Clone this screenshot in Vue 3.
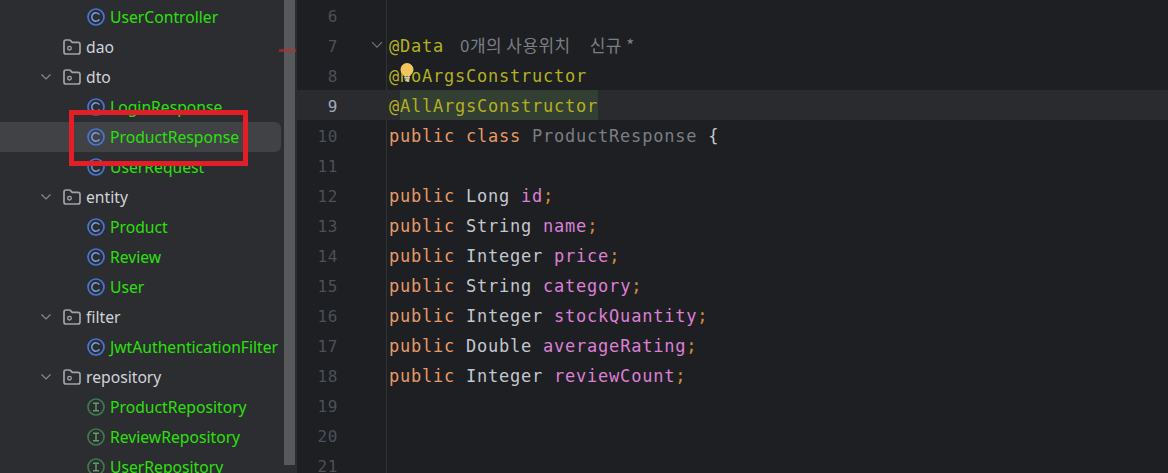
<script setup>
const tree = [
  { name: 'UserController', indent: 87, icon: 'c', kind: 'file' },
  { name: 'dao', indent: 63, icon: 'folder', kind: 'dir' },
  { name: 'dto', indent: 63, icon: 'folder', kind: 'dir', open: true },
  { name: 'LoginResponse', indent: 87, icon: 'c', kind: 'file' },
  { name: 'ProductResponse', indent: 87, icon: 'c', kind: 'file', selected: true },
  { name: 'UserRequest', indent: 87, icon: 'c', kind: 'file' },
  { name: 'entity', indent: 63, icon: 'folder', kind: 'dir', open: true },
  { name: 'Product', indent: 87, icon: 'c', kind: 'file' },
  { name: 'Review', indent: 87, icon: 'c', kind: 'file' },
  { name: 'User', indent: 87, icon: 'c', kind: 'file' },
  { name: 'filter', indent: 63, icon: 'folder', kind: 'dir', open: true },
  { name: 'JwtAuthenticationFilter', indent: 87, icon: 'c', kind: 'file' },
  { name: 'repository', indent: 63, icon: 'folder', kind: 'dir', open: true },
  { name: 'ProductRepository', indent: 87, icon: 'i', kind: 'file' },
  { name: 'ReviewRepository', indent: 87, icon: 'i', kind: 'file' },
  { name: 'UserRepository', indent: 87, icon: 'i', kind: 'file' }
]

const field = (type, name) => [
  ['kw', 'public '],
  ['type', type + ' '],
  ['field', name],
  ['semi', ';']
]

const lines = [
  { n: 6, parts: [] },
  { n: 7, fold: true, parts: [['ann', '@Data']], hint: true },
  { n: 8, parts: [['ann', '@NoArgsConstructor']] },
  { n: 9, current: true, parts: [['ann', '@'], ['ann mark', 'AllArgsConstructor']] },
  { n: 10, parts: [['kw', 'public class '], ['cls', 'ProductResponse '], ['type', '{']] },
  { n: 11, parts: [] },
  { n: 12, parts: field('Long', 'id') },
  { n: 13, parts: field('String', 'name') },
  { n: 14, parts: field('Integer', 'price') },
  { n: 15, parts: field('String', 'category') },
  { n: 16, parts: field('Integer', 'stockQuantity') },
  { n: 17, parts: field('Double', 'averageRating') },
  { n: 18, parts: field('Integer', 'reviewCount') },
  { n: 19, parts: [] },
  { n: 20, parts: [] },
  { n: 21, parts: [] }
]
</script>

<template>
  <div class="ide">
    <aside class="sidebar">
      <ul class="tree">
        <li
          v-for="row in tree"
          :key="row.name"
          class="row"
          :class="{ selected: row.selected }"
          :style="{ paddingLeft: row.indent + 'px' }"
        >
          <svg v-if="row.open" class="chevron" width="12" height="8" viewBox="0 0 12 8" fill="none">
            <path d="M1.500 1.500 6 6l4.500-4.500" stroke="#878a90" stroke-width="1.200" />
          </svg>
          <svg v-if="row.icon === 'folder'" class="icon" width="18" height="16" viewBox="0 0 18 16" fill="none">
            <path d="M1 3C1 1.900 1.900 1 3 1h3.200c.6 0 1 .3 1.400.7L9.200 3.400H15c1.100 0 2 .9 2 2V13c0 1.100-.9 2-2 2H3c-1.100 0-2-.9-2-2V3Z" stroke="#a0a3a9" stroke-width="1.700" />
            <circle cx="6.500" cy="9.200" r="1.800" stroke="#a0a3a9" stroke-width="1.300" />
          </svg>
          <svg v-else-if="row.icon === 'c'" class="icon" width="18" height="18" viewBox="0 0 18 18" fill="none">
            <circle cx="9" cy="9" r="8" stroke="#4675d4" stroke-width="1.700" />
            <path d="M12.400 6.600A4.200 4.200 0 1 0 12.400 11.400" stroke="#7aa2ec" stroke-width="1.400" />
          </svg>
          <svg v-else class="icon" width="18" height="18" viewBox="0 0 18 18" fill="none">
            <circle cx="9" cy="9" r="8" stroke="#3f7a4a" stroke-width="1.700" />
            <path d="M6 5.200h6M6 12.800h6M9 5.200v7.600" stroke="#5f9e6a" stroke-width="1.400" />
          </svg>
          <span :class="row.kind">{{ row.name }}</span>
        </li>
      </ul>
    </aside>
    <div class="scrollbar"><div class="thumb"></div></div>

    <main class="editor">
      <div
        v-for="line in lines"
        :key="line.n"
        class="line"
        :class="{ current: line.current }"
      >
        <span class="num">{{ line.n }}</span>
        <span class="fold">
          <svg v-if="line.fold" width="12" height="8" viewBox="0 0 12 8" fill="none">
            <path d="M1 1.200 6 6.200l5-5" stroke="#6f737a" stroke-width="1.200" />
          </svg>
        </span>
        <span class="code"><span v-for="(p, i) in line.parts" :key="i" :class="p[0]">{{ p[1] }}</span><span v-if="line.hint" class="hint"><span class="uses">0개의 사용위치</span><span>신규 *</span></span></span>
      </div>
      <svg class="bulb" width="16" height="20" viewBox="0 0 16 20">
        <path d="M8 1a6.500 6.500 0 0 0-6.500 6.500c0 2.400 1.200 3.700 2.300 5 .5.600.8 1 .9 1.600h6.600c.1-.6.4-1 .9-1.600 1.100-1.300 2.300-2.600 2.300-5A6.500 6.500 0 0 0 8 1Z" fill="#f4c55c" />
        <path d="M5 15.200h6M5.500 17h5M6 18.800h4" stroke="#dfe1e5" stroke-width="1.100" />
      </svg>
    </main>

    <i class="tick"></i>
    <div class="callout"></div>
  </div>
</template>

<style>
html, body { margin: 0; background: #1e1f22; }
</style>

<style scoped>
.ide {
  position: relative;
  display: flex;
  width: 1168px;
  height: 473px;
  overflow: hidden;
  background: #1e1f22;
}
.sidebar {
  flex: 0 0 284px;
  background: #2b2d30;
  overflow: hidden;
}
.tree {
  list-style: none;
  margin: 2px 0 0;
  padding: 0;
}
.row {
  position: relative;
  display: flex;
  align-items: center;
  gap: 5px;
  height: 30px;
  width: 281px;
  box-sizing: border-box;
  font: 15.7px "Noto Sans", "Open Sans", sans-serif;
  white-space: nowrap;
}
.row.selected {
  background: #404246;
  border-radius: 0 6px 6px 0;
}
.chevron {
  position: absolute;
  left: 40px;
  top: 11px;
}
.icon { flex: none; }
.dir { color: #d0d3d8; }
.file { color: #2be00c; }
.tick {
  position: absolute;
  left: 279px;
  top: 49px;
  width: 17px;
  height: 3px;
  background: rgba(190, 42, 46, 0.62);
}
.scrollbar {
  flex: 0 0 13px;
  background: #2b2d30;
}
.thumb {
  width: 11px;
  height: 465px;
  background: #58595b;
}
.editor {
  position: relative;
  flex: 1;
  font: 17px "DejaVu Sans Mono", monospace;
  letter-spacing: 0.77px;
}
.editor::before {
  content: "";
  position: absolute;
  left: 89px;
  top: 0;
  bottom: 0;
  width: 1px;
  background: #313337;
}
.line {
  position: relative;
  display: flex;
  align-items: center;
  height: 30px;
  white-space: pre;
}
.line.current { background: #292b2f; }
.num {
  flex: 0 0 41px;
  height: 30px;
  line-height: 34px;
  text-align: right;
  color: #4b5059;
  font-size: 16px;
  letter-spacing: 0.6px;
}
.current .num { color: #a1a8b5; }
.fold {
  flex: 0 0 51px;
  display: flex;
  justify-content: flex-end;
  padding-right: 6px;
  box-sizing: border-box;
  height: 10px;
  align-items: center;
}
.code { display: block; height: 30px; line-height: 32px; }
.kw { color: #e69a66; }
.ann { color: #b4b021; }
.mark { display: inline-block; height: 30px; vertical-align: top; background: #333f33; }
.type { color: #c3c8d0; }
.cls { color: #7a7e85; }
.field { color: #dc7fd6; }
.semi { color: #cf8e3d; }
.hint {
  margin-left: 16px;
  color: #7a7e85;
  font: 17px "Noto Sans CJK KR", sans-serif;
  letter-spacing: 0.45px;
}
.uses { margin-right: 19px; }
.bulb {
  position: absolute;
  left: 102px;
  top: 62px;
}
.callout {
  position: absolute;
  left: 69px;
  top: 110px;
  width: 179px;
  height: 56px;
  box-sizing: border-box;
  border: 5px solid #e21f26;
}
</style>
